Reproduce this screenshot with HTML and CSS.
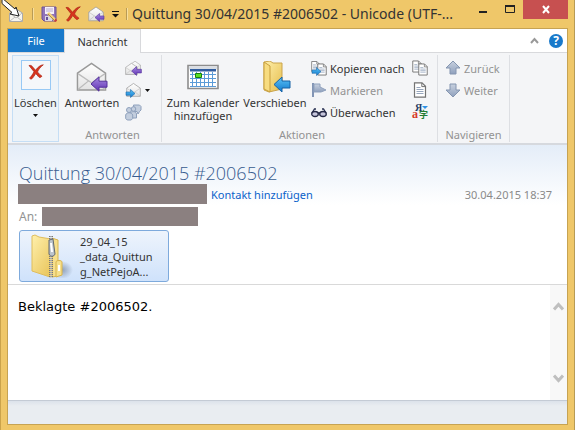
FILE: index.html
```html
<!DOCTYPE html>
<html lang="de">
<head>
<meta charset="utf-8">
<title>Quittung 30/04/2015 #2006502</title>
<link rel="stylesheet" href="styles.css">
</head>
<body>
<svg class="defs" aria-hidden="true">
  <defs>
    <linearGradient id="purple" x1="0" y1="0" x2="0" y2="1"><stop offset="0" stop-color="#a58ae0"/><stop offset="1" stop-color="#6233b5"/></linearGradient>
    <linearGradient id="blue" x1="0" y1="0" x2="0" y2="1"><stop offset="0" stop-color="#5cc4f8"/><stop offset="1" stop-color="#1179cc"/></linearGradient>
    <linearGradient id="folder" x1="0" y1="0" x2="1" y2="1"><stop offset="0" stop-color="#fff0ac"/><stop offset="1" stop-color="#e5bd4d"/></linearGradient>
    <linearGradient id="steel" x1="0" y1="0" x2="0" y2="1"><stop offset="0" stop-color="#c8d1df"/><stop offset="1" stop-color="#8fa0bd"/></linearGradient>
    <linearGradient id="paper" x1="0" y1="0" x2="0" y2="1"><stop offset="0" stop-color="#fff"/><stop offset="1" stop-color="#e2e2e2"/></linearGradient>
    <radialGradient id="shade"><stop offset="0" stop-color="#7889a3" stop-opacity=".75"/><stop offset="1" stop-color="#7889a3" stop-opacity="0"/></radialGradient>
  </defs>
  <symbol id="envelope" viewBox="0 0 32 32"><path d="M1.500 12 16 2l14.500 10v17.500h-29z" fill="url(#paper)" stroke="#999" stroke-width="1.500"/><path d="M2 12.500 16 22 30 12.500M2 29l11-9M30 29l-11-9" fill="none" stroke="#bbb" stroke-width="1.300"/></symbol>
  <symbol id="cross" viewBox="0 0 16 16"><path d="M1 1.500C3 1 4 2 5 3.300L7.500 6.300C10 3 12.500 1 15.300.8 12.500 3 10.500 5.500 9.500 8c1.500 1.800 2.800 3.200 4.500 4.200-1.700 2-3 1.500-4-.2L7.700 9.600C6.500 11.500 5 13.700 4 14.700c-1 .7-2 .2-2.500-.7C3.300 12.500 4.800 10 6 7.700z" fill="#d8331d" stroke="#a82516" stroke-width=".7"/></symbol>
  <symbol id="left" viewBox="0 0 18 16"><path d="M1 8 9 .8v4.400h8v6H9v4z" fill="url(#purple)" stroke="#54309b"/></symbol>
  <symbol id="right" viewBox="0 0 18 16"><path d="M17 8 9 .8v4.400H1v6h8v4z" fill="url(#blue)" stroke="#1762a6"/></symbol>
  <symbol id="page" viewBox="0 0 13 16"><path d="M1 .8h7.500L12 4.300v10.900H1z" fill="#fff" stroke="#737373" stroke-width="1.200"/><path d="M8.300 1v3.600H12" fill="none" stroke="#737373"/><path d="M3 5.500h4M3 7.500h7M3 9.500h7M3 11.500h7" stroke="#97a6bd" stroke-width="1"/></symbol>
</svg>
<div class="window">
  <header class="titlebar">
    <div class="quick">
      <svg class="i17" viewBox="0 0 17 17"><path d="M1.500 7 8 3l6.500 4v8.500h-13z" fill="#f6f4ee" stroke="#aaa"/><path d="m2 7 6 5 6-5M2 15l5-4M14 15l-5-4" fill="none" stroke="#bbb"/><path d="M-6-8 7 3l1-2 3 9-9-2 2-1.500-10-9z" fill="#fff" stroke="#222"/></svg>
      <span class="tick"></span>
      <button aria-label="Speichern"><svg class="i17" viewBox="0 0 17 17"><path d="M1 1h14v14H3l-2-2z" fill="#9274b8" stroke="#68509a"/><path d="M4 1h9v7H4z" fill="#f5f1fb"/><path d="M5 3h7M5 5h7" stroke="#b9a9cf"/><path d="M4 10h7v5H4z" fill="#d9d7e3"/><path d="M5 11h2v3H5z" fill="#68509a"/><path d="m7 7 7 7" stroke="#f3d27b" stroke-width="3"/><path d="m7 8 6 6" stroke="#a98d4a"/><path d="m13 15 2-3 1 3-2 1z" fill="#c93f38"/></svg></button>
      <button aria-label="Löschen"><svg class="i16"><use href="#cross"/></svg></button>
      <button aria-label="Antworten"><svg class="i17" viewBox="0 0 17 17"><use href="#envelope" x="0" y="0" width="16" height="16"/><use href="#left" x="6" y="7" width="11" height="9"/></svg></button>
      <button aria-label="Symbolleiste anpassen"><svg class="drop" viewBox="0 0 7 7"><path d="M0 3h7L3.500 6.500z" fill="#111"/><path d="M0 .5h7" stroke="#111"/></svg></button>
      <span class="tick"></span>
    </div>
    <h1>Quittung 30/04/2015 #2006502 - Unicode (UTF-...</h1>
    <div class="controls">
      <button aria-label="Minimieren"><svg viewBox="0 0 30 19"><path d="M16 12h8" stroke="#222" stroke-width="2"/></svg></button>
      <button aria-label="Maximieren"><svg viewBox="0 0 30 19"><path d="M12.500 6v6.500h9V6" fill="none" stroke="#222"/><path d="M12 6h10" stroke="#222" stroke-width="2"/></svg></button>
      <button class="close" aria-label="Schließen"><svg viewBox="0 0 45 19"><path d="m20 6 6 7M26 6l-6 7" stroke="#fff" stroke-width="2"/></svg></button>
    </div>
  </header>
  <div class="client">
    <nav class="tabs">
      <button class="file">File</button>
      <button class="active">Nachricht</button>
      <span class="tools">
        <button aria-label="Menüband minimieren"><svg class="fold" viewBox="0 0 9 7"><path d="m1 6 3.500-4L8 6" fill="none" stroke="#999" stroke-width="2"/></svg></button>
        <button class="help" aria-label="Hilfe">?</button>
      </span>
    </nav>
    <section class="ribbon">
      <button class="delete">
        <span class="tile"><svg class="i16"><use href="#cross"/></svg></span>
        <span>Löschen</span>
        <svg class="caret" viewBox="0 0 5 3"><path d="M0 0h5L2.500 3z"/></svg>
      </button>
      <div class="group reply">
        <div class="items">
          <button class="big"><svg class="i32" viewBox="0 0 32 32"><use href="#envelope" x="0" y="0" width="31" height="32"/><use href="#left" x="14" y="14" width="18" height="18"/></svg><span>Antworten</span></button>
          <div class="stack">
            <button aria-label="Allen antworten"><svg class="i17" viewBox="0 0 17 17"><use href="#envelope" x="4" y="0" width="12" height="13"/><use href="#envelope" x="0" y="2" width="13" height="14"/><use href="#left" x="6" y="6" width="11" height="10"/></svg></button>
            <button aria-label="Weiterleiten"><svg class="i17" viewBox="0 0 17 17"><use href="#envelope" x="1" y="0" width="15" height="16"/><use href="#right" x="0" y="7" width="11" height="9"/></svg><svg class="caret" viewBox="0 0 5 3"><path d="M0 0h5L2.500 3z"/></svg></button>
            <button aria-label="Chat"><svg class="i17" viewBox="0 0 17 17"><g fill="#c3cede" stroke="#8ea0bc"><path d="M8.500 1h6l1.500 1.500V6l-1.500 1.500L13 10l-1-2.500H9z"/><circle cx="8.500" cy="5" r="2.300"/><path d="M5 9c2-2 6-2 6.500 1v4H7z"/><circle cx="4" cy="6" r="2.500"/><path d="M.7 11c.5-3 6-3 7 0v3.500l-1.500 1.500h-4L.7 14.500z"/></g></svg></button>
          </div>
        </div>
        <span class="caption">Antworten</span>
      </div>
      <div class="group actions">
        <div class="items">
          <button class="big calendar"><svg class="i32" viewBox="0 0 32 32"><path d="M1 4.500h30v23H1z" fill="#fff" stroke="#8d8d8d" stroke-width="1.600"/><path d="M2 5.500h28v3H2z" fill="#d8dde4"/><path d="M3 8h26v2.500H3z" fill="#315d9f"/><path d="M3 13.500h26M3 17.500h26M3 21.500h26M3 25.500h26M5.500 11v15M9.500 11v15M13.500 11v15M17.500 11v15M21.500 11v15M25.500 11v15" stroke="#5b9bd7"/><path d="M8.500 12.500h6v4h-6z" fill="#59df24" stroke="#16810d"/></svg><span>Zum Kalender<br>hinzufügen</span></button>
          <button class="big move"><svg class="i32" viewBox="0 0 32 32"><path d="m5 1 6-1 3 2h9v26l-13 3-5-2z" fill="url(#folder)" stroke="#caa44c"/><path d="m5 1 6 4v26l-6-3z" fill="#f7dc80" stroke="#c79e3d"/><path d="m15 23.500 8-7.500v4h8v7h-8v4z" fill="url(#blue)" stroke="#1762a6"/></svg><span>Verschieben</span></button>
          <div class="stack">
            <button><svg class="i16" viewBox="0 0 16 16"><use href="#page" x="0" y="0" width="9" height="13"/><use href="#page" x="6" y="3" width="10" height="13"/><use href="#right" x="0" y="7" width="11" height="9"/></svg>Kopieren nach</button>
            <button class="off"><svg class="i16" viewBox="0 0 16 16"><path d="M1 1h2v14H1z" fill="#8295b5"/><path d="M3 2h6v3l6 3-5 2H3z" fill="url(#steel)" stroke="#8fa1bd"/></svg>Markieren</button>
            <button><svg class="i16" viewBox="0 0 16 16"><path d="M1 9 3.500 5 5 5M15 9l-2.500-4L11 5" fill="none" stroke="#293052" stroke-width="1.300"/><ellipse cx="4" cy="10" rx="3.300" ry="2.500" fill="#c7c6dc" stroke="#252946" stroke-width="1.300"/><ellipse cx="12" cy="10" rx="3.300" ry="2.500" fill="#c7c6dc" stroke="#252946" stroke-width="1.300"/><path d="M7 9h2" stroke="#252946" stroke-width="1.500"/></svg>Überwachen</button>
          </div>
          <div class="stack extra">
            <button aria-label="Kopieren"><svg class="i16" viewBox="0 0 16 16"><use href="#page" x="0" y="0" width="10" height="13"/><use href="#page" x="6" y="3" width="10" height="13"/></svg></button>
            <button aria-label="Quelltext"><svg class="i16"><use href="#page"/></svg></button>
            <button aria-label="Codierung"><svg class="i16 glyphs" viewBox="0 0 16 16"><text x="3" y="7">Я</text><text class="latin" x="0" y="14">a</text><text class="cjk" x="7" y="14">字</text><path d="M10 2h6l-3 3z" fill="#2f91e6"/></svg></button>
          </div>
        </div>
        <span class="caption">Aktionen</span>
      </div>
      <div class="group navigate">
        <div class="items">
          <div class="stack off">
            <button><svg class="i16" viewBox="0 0 16 16"><path d="m8 1 7 7h-4v6H5V8H1z" fill="url(#steel)" stroke="#8495b0"/></svg>Zurück</button>
            <button><svg class="i16" viewBox="0 0 16 16"><path d="m8 15 7-7h-4V2H5v6H1z" fill="url(#steel)" stroke="#8495b0"/></svg>Weiter</button>
          </div>
        </div>
        <span class="caption">Navigieren</span>
      </div>
    </section>
    <section class="message-head">
      <h2>Quittung 30/04/2015 #2006502</h2>
      <div class="sender"><span class="redacted from"></span><a href="#kontakt">Kontakt hinzufügen</a><time>30.04.2015 18:37</time></div>
      <div class="recipient"><span>An:</span><span class="redacted to"></span></div>
      <button class="attachment">
        <svg class="zip" viewBox="0 0 42 44"><ellipse cx="31" cy="36" rx="11" ry="9" fill="url(#shade)"/><path d="m1 2 3-1 4 2 18 3v36l-7 1L1 37z" fill="url(#folder)" stroke="#dfbd5d"/><path d="m21 4 6 2v36l-6 1z" fill="#f6df8c" stroke="#d9b651"/><path d="M25 28c0-2 6-2 6 0v13l-6 2z" fill="#f7e08b" stroke="#d8b34b"/><path d="M28 31v6" stroke="#fff" stroke-width="2"/><path d="M20 2v41" stroke="#777" stroke-width="4" stroke-dasharray="1 1"/><path d="M20 2v41" stroke="#d8dadd" stroke-width="1"/><path d="m18 6 4-1 2 15c-1 3-5 3-6 0z" fill="#bcc4cc" stroke="#626970"/><path d="m20 9 1 9" stroke="#fff" stroke-width="2"/></svg>
        <span>29_04_15<br>_data_Quittun<br>g_NetPejoA...</span>
      </button>
    </section>
    <main class="message">
      <p>Beklagte #2006502.</p>
      <div class="scroll">
        <button aria-label="Nach oben"><svg class="arrow" viewBox="0 0 11 9"><path d="m1 7.500 4.500-5 4.500 5" fill="none" stroke="#bfbfbf" stroke-width="3"/></svg></button>
        <button aria-label="Nach unten"><svg class="arrow" viewBox="0 0 11 9"><path d="m1 1.500 4.500 5 4.500-5" fill="none" stroke="#bfbfbf" stroke-width="3"/></svg></button>
      </div>
    </main>
    <footer></footer>
  </div>
</div>
</body>
</html>
```

FILE: styles.css
```css
* { box-sizing: border-box; }
body { margin: 0; font: 11px/13px "Noto Sans", "Open Sans", sans-serif; color: #333; }
button { padding: 0; border: 0; background: none; color: inherit; font: inherit; }
svg { display: block; flex: none; }
.defs { position: absolute; width: 0; height: 0; }
.i16 { width: 16px; height: 16px; }
.i17 { width: 17px; height: 17px; overflow: visible; }
.i32 { width: 32px; height: 32px; }
.window { display: flex; flex-direction: column; min-height: 100vh; padding: 0 6px 5px; background: #efc769; border-left: 1px solid #cba34b; border-right: 1px solid #b79b55; }
.titlebar { display: flex; align-items: flex-start; height: 28px; }
.quick { display: flex; align-items: center; gap: 7px; height: 28px; padding-left: 1px; }
.tick { width: 2px; height: 12px; background: #b99b55; border-right: 1px solid #f8df9e; }
.drop { width: 7px; height: 7px; }
h1 { flex: 1; min-width: 0; margin: 0 0 0 4px; font: 400 14px/28px "Noto Sans", "Open Sans", sans-serif; white-space: nowrap; }
.controls { display: flex; }
.controls svg { width: 30px; height: 19px; }
.controls .close { background: #c75050; }
.controls .close svg { width: 45px; }
.client { display: flex; flex: 1; flex-direction: column; border: 1px solid #c6a353; background: #fff; }
.tabs { display: flex; height: 24px; border-bottom: 1px solid #d8d9dc; }
.tabs .file { width: 56px; background: #1979ca; color: #fff; }
.tabs .active { width: 77px; height: 24px; background: #f4f5f7; border: solid #d8d9dc; border-width: 1px 1px 0; }
.tools { display: flex; align-items: center; gap: 10px; margin-left: auto; padding-right: 4px; }
.fold { width: 9px; height: 7px; }
.help { width: 14px; height: 14px; border-radius: 50%; background: #1979ca; color: #fff; font-size: 12px; font-weight: 700; line-height: 14px; }
.ribbon { display: flex; height: 92px; padding: 2px 4px; background: #f4f5f7; border-bottom: 2px solid #d6d9de; }
.delete { display: flex; flex-direction: column; align-items: center; width: 47px; border: 1px solid #c5def5; background: #edf3f8; height: 87px; padding-top: 4px; }
.tile { display: flex; justify-content: center; width: 30px; height: 30px; margin-bottom: 6px; padding-top: 3px; border: 1px solid #98c9f5; background: #f5f7fa; }
.caret { width: 5px; height: 3px; fill: #111; }
.delete .caret { margin-top: 5px; }
.group { display: flex; flex-direction: column; justify-content: space-between; height: 87px; border-right: 1px solid #dddfe3; }
.items { display: flex; }
.caption { color: #929292; line-height: 15px; text-align: center; }
.reply { width: 103px; padding-left: 5px; }
.actions { width: 276px; padding-left: 5px; }
.navigate { width: 72px; padding-left: 7px; }
.navigate .caption { margin-left: -7px; }
.big { display: flex; flex-direction: column; align-items: center; gap: 3px; width: 56px; padding-top: 6px; white-space: nowrap; }
.calendar { width: 72px; }
.move { width: 72px; }
.stack { display: flex; flex-direction: column; padding-top: 2px; }
.stack button { display: flex; align-items: center; gap: 3px; height: 22px; white-space: nowrap; }
.reply .stack { margin-left: 5px; }
.off { color: #939393; }
.extra { margin-left: auto; padding-right: 9px; }
.glyphs { overflow: visible; fill: #263b63; font: 700 10px "Liberation Serif", serif; }
.latin { fill: #d63829; font-size: 12px; }
.cjk { fill: #247d35; font: 700 9px "Noto Sans CJK JP", sans-serif; }
.message-head { display: flex; flex-direction: column; align-items: flex-start; height: 139px; padding: 17px 15px 0 11px; background: linear-gradient(#e4edf8, #fff 60px); }
h2 { margin: 0; color: #375b8f; font: 300 18px/22px "Open Sans", "Noto Sans", sans-serif; }
.redacted { background: #8b8080; }
.sender { display: flex; align-items: center; align-self: stretch; height: 20px; }
.from { width: 189px; height: 20px; margin-left: -1px; margin-right: 4px; }
.sender a { color: #0b62ca; text-decoration: none; }
.sender time { margin-left: auto; color: #8a8a8a; }
.recipient { display: flex; align-items: center; gap: 5px; height: 19px; margin-top: 3px; color: #939393; font-size: 12px; }
.to { width: 156px; height: 19px; }
.attachment { display: flex; align-items: center; gap: 7px; width: 150px; height: 52px; margin-top: 4px; padding-left: 11px; border: 1px solid #7eaadc; border-radius: 3px; background: linear-gradient(#eef4fc, #cfe2fb); color: #333; text-align: left; line-height: 15px; }
.zip { width: 42px; height: 44px; }
.message { display: flex; flex: 1; justify-content: space-between; border-top: 1px solid #d9d9d9; background: #fff; }
.message p { margin: 13px 10px; color: #000; font: 13px/18px "DejaVu Sans", sans-serif; }
.scroll { display: flex; flex-direction: column; justify-content: space-between; align-items: center; width: 17px; padding: 17px 0; background: #f8f8f8; }
.arrow { width: 11px; height: 9px; }
footer { height: 24px; background: linear-gradient(#dce2ea, #e9edf1 5px); border-top: 1px solid #c4cbd5; }
```
